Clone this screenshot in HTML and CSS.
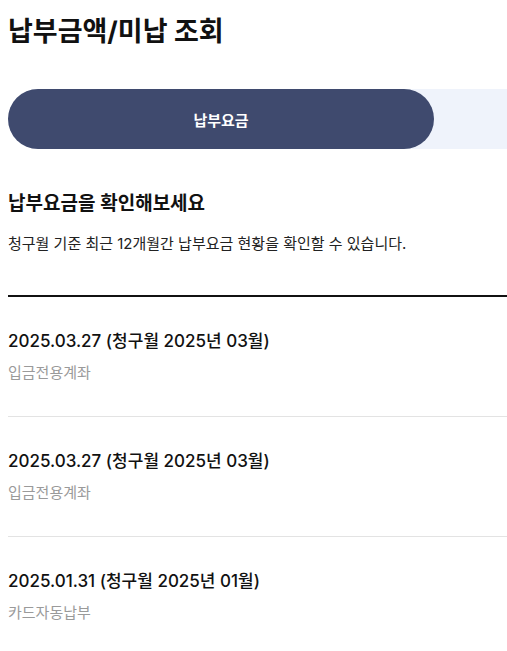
FILE: index.html
```html
<!DOCTYPE html>
<html lang="ko">
<head>
  <meta charset="UTF-8">
  <meta name="viewport" content="width=device-width, initial-scale=1.0">
  <title>납부금액/미납 조회</title>
  <link rel="stylesheet" href="styles.css">
</head>
<body>
  <div class="page">
    <h1 class="page-title">납부금액/미납 조회</h1>

    <div class="tabs">
      <button class="tab active">납부요금</button>
      <button class="tab"></button>
    </div>

    <h2 class="section-title">납부요금을 확인해보세요</h2>
    <p class="section-desc">청구월 기준 최근 12개월간 납부요금 현황을 확인할 수 있습니다.</p>

    <ul class="pay-list">
      <li class="pay-item">
        <div class="pay-date">2025.03.27 (청구월 2025년 03월)</div>
        <div class="pay-method">입금전용계좌</div>
      </li>
      <li class="pay-item">
        <div class="pay-date">2025.03.27 (청구월 2025년 03월)</div>
        <div class="pay-method">입금전용계좌</div>
      </li>
      <li class="pay-item">
        <div class="pay-date">2025.01.31 (청구월 2025년 01월)</div>
        <div class="pay-method">카드자동납부</div>
      </li>
    </ul>
  </div>
</body>
</html>
```

FILE: styles.css
```css
body {
  margin: 0;
  background: #fff;
  font-family: Inter, "Noto Sans CJK KR", sans-serif;
  color: #111;
  overflow-x: hidden;
}
.page {
  padding: 0 0 0 8px;
}
.page-title {
  margin: 0;
  padding-top: 14px;
  font-size: 27px;
  font-weight: 700;
  line-height: 36px;
}
.tabs {
  display: flex;
  margin-top: 39px;
  height: 60px;
  background: #eff3fb;
  border-radius: 30px 0 0 30px;
}
.tab {
  flex: none;
  border: none;
  background: transparent;
  font-family: inherit;
  font-size: 15px;
  font-weight: 700;
  padding: 0;
}
.tab.active {
  width: 426px;
  background: #3f4a6e;
  color: #fff;
  border-radius: 30px;
}
.section-title {
  margin: 41px 0 0;
  font-size: 19px;
  font-weight: 600;
  line-height: 28px;
}
.section-desc {
  margin: 15px 0 0;
  font-size: 15px;
  line-height: 22px;
  color: #222;
}
.pay-list {
  list-style: none;
  margin: 40px 0 0;
  padding: 0;
  border-top: 2px solid #111;
}
.pay-item {
  padding: 32px 0;
  border-bottom: 1px solid #e3e3e3;
}
.pay-date {
  font-size: 17px;
  font-weight: 500;
  line-height: 24px;
}
.pay-method {
  margin-top: 9px;
  font-size: 15px;
  line-height: 22px;
  color: #9a9a9a;
}
```
